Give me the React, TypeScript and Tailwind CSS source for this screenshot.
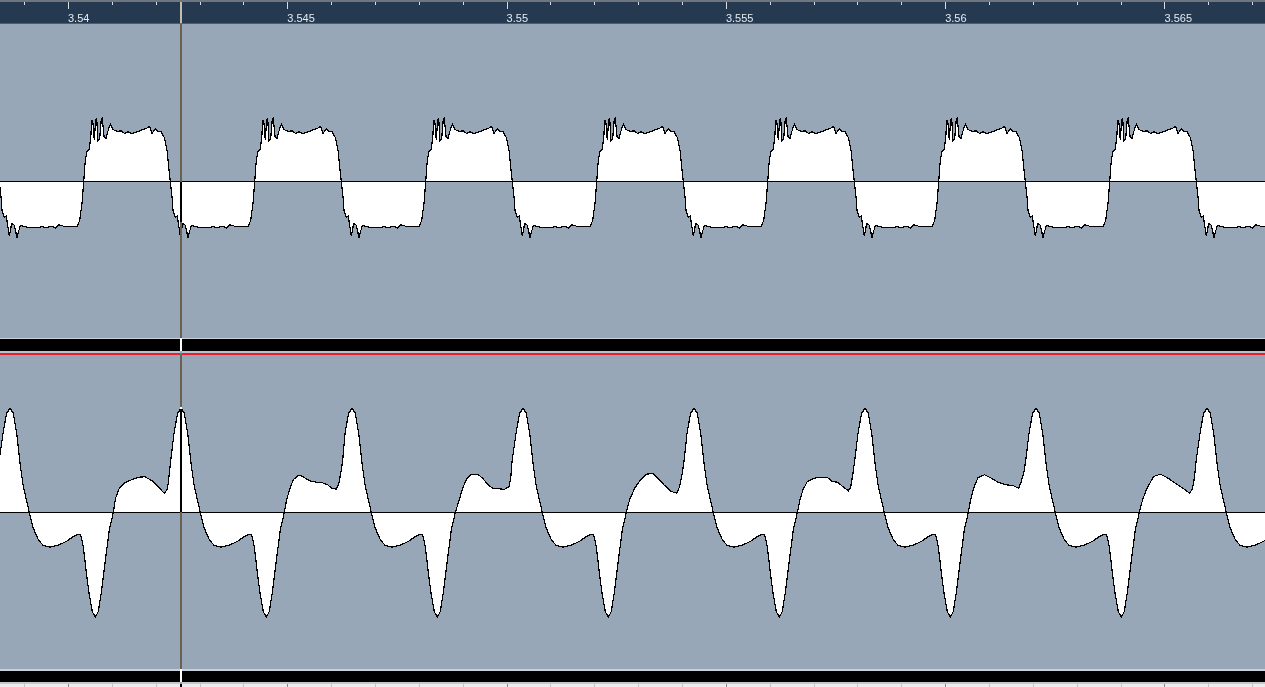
const PERIOD = 171;
const ZERO_Y = 157.5;

// points below are read off 3x crops of the reference: [px, py]
const SQUARE: number[][] = [
  [17, 214], [22, 150], [27, 125], [33, 118], [38, 85], [41, 30], [44, 30], [49, 90], [53, 30], [56, 26], [60, 90],
  [65, 85], [70, 26], [73, 24], [78, 78], [84, 84], [92, 55], [98, 42], [105, 58], [118, 64], [130, 62], [140, 70],
  [150, 65], [160, 70], [175, 66], [190, 60], [205, 55], [215, 48], [222, 70], [232, 55], [240, 65], [250, 65],
  [260, 85], [267, 120], [272, 170], [277, 214], [282, 260], [285, 300], [292, 322], [298, 318], [307, 378], [314, 340],
  [322, 345], [330, 382], [340, 345], [355, 350], [370, 353], [390, 352], [405, 350], [420, 352], [435, 348], [445, 354],
  [455, 344], [470, 348], [490, 350], [510, 350], [518, 330], [525, 280], [530, 214],
];

// peak down through the negative lobe, x relative to the peak
const LOBE: number[][] = [
  [0, 25], [10, 40], [20, 100], [30, 190], [40, 260], [58, 338], [70, 385], [85, 420], [100, 437], [120, 442],
  [145, 436], [170, 424], [190, 410], [205, 403], [212, 405], [220, 440], [228, 510], [237, 580], [247, 635], [256, 652],
  [265, 635], [275, 570], [285, 490], [298, 390],
];

// the hump between lobe and next peak differs a little each cycle
const HUMPS: number[][][] = [
  [[0, 143], [7, 100], [18, 70], [35, 53], [55, 45], [75, 37], [95, 36], [115, 47], [130, 60], [145, 77], [154, 86], [163, 70], [172, -10]],
  [[0, 143], [7, 105], [17, 70], [27, 45], [40, 33], [50, 32], [63, 40], [77, 48], [95, 52], [115, 54], [130, 60], [143, 70], [155, 73], [163, 60], [170, 20], [175, -10]],
  [[0, 143], [12, 105], [22, 70], [34, 42], [47, 29], [67, 28], [82, 40], [97, 58], [112, 70], [132, 72], [147, 74], [162, 65], [167, 30], [170, -10]],
  [[0, 143], [10, 105], [25, 70], [45, 42], [60, 28], [80, 26], [95, 40], [115, 62], [135, 80], [152, 85], [160, 65], [167, 30], [173, -10]],
  [[0, 143], [8, 105], [17, 75], [30, 50], [50, 40], [70, 37], [90, 38], [105, 50], [120, 52], [140, 68], [153, 78], [160, 68], [167, 25], [172, -10]],
  [[0, 143], [7, 105], [16, 70], [29, 38], [49, 30], [69, 40], [89, 52], [114, 60], [134, 62], [151, 70], [159, 50], [167, 20], [172, -10]],
  [[0, 143], [10, 105], [23, 70], [43, 35], [63, 28], [83, 38], [108, 55], [133, 72], [151, 85], [160, 70], [166, 35], [170, -10]],
];

function squarePoints() {
  const out: string[] = [];
  for (let n = -2; n < 9; n++) {
    for (const [px, py] of SQUARE) {
      out.push(`${(78 + px / 3 + n * PERIOD).toFixed(1)},${(ZERO_Y + (py - 214) / 3).toFixed(1)}`);
    }
  }
  return out;
}

function pulsePoints() {
  const out: string[] = [];
  for (let n = -1; n < 8; n++) {
    const peak = 10 + n * PERIOD;
    for (const [dx, py] of LOBE) {
      out.push(`${(peak + dx / 3).toFixed(1)},${(ZERO_Y + (py - 338) / 3).toFixed(1)}`);
    }
    const crossing = peak + 103.3;
    for (const [dx, py] of HUMPS[(n + 7) % 7]) {
      out.push(`${(crossing + dx / 3).toFixed(1)},${(ZERO_Y + (py - 143) / 3).toFixed(1)}`);
    }
    const next = peak + PERIOD;
    out.push(`${(next - 7).toFixed(1)},${(ZERO_Y - 79).toFixed(1)}`);
    out.push(`${(next - 3.5).toFixed(1)},${(ZERO_Y - 99).toFixed(1)}`);
  }
  return out;
}

const TICKS = Array.from({ length: 30 }, (_, i) => 24.6 + i * 43.86);
const LABELS = ["3.54", "3.545", "3.55", "3.555", "3.56", "3.565"];

function Ruler() {
  return (
    <div className="h-[21px] shrink-0 overflow-hidden bg-[#253a50]">
      <svg className="block h-[7px] w-full" shapeRendering="crispEdges">
        {TICKS.map((x, i) => (
          <line key={i} x1={x} x2={x} y1={0} y2={i % 5 === 1 ? 7 : 3} stroke="#d8dee6" />
        ))}
      </svg>
      <div className="flex pl-[68px] pt-[4px] will-change-transform">
        {LABELS.map((label) => (
          <div key={label} className="w-[219.3px] shrink-0 text-[11px] leading-[10px] text-[#e6ebf0]">
            {label}
          </div>
        ))}
      </div>
    </div>
  );
}

function Trace({ pts }: { pts: string[] }) {
  // close the fill along the centre line so it doesn't cut across the peaks
  const fill = [`-400,${ZERO_Y}`, ...pts, `1700,${ZERO_Y}`].join(" ");
  return (
    <div className="h-[314px] shrink-0 bg-[#98a7b8]">
      <svg className="block h-full w-full" shapeRendering="crispEdges">
        <polygon points={fill} fill="#fff" stroke="none" />
        <polyline points={pts.join(" ")} fill="none" stroke="#000" strokeWidth={1.2} />
        <line x1={0} x2={1265} y1={ZERO_Y} y2={ZERO_Y} stroke="#000" />
      </svg>
    </div>
  );
}

// the playhead changes colour depending on what it crosses
const CURSOR: [string, number][] = [
  ["bg-[#c9bdaa]", 21],
  ["bg-[#2e8f8f]", 1],
  ["bg-[#6b5f52]", 158],
  ["bg-black", 40],
  ["bg-[#6b5f52]", 116],
  ["bg-white", 13],
  ["bg-[#98a7b8]", 2],
  ["bg-[#2e8f8f]", 2],
  ["bg-[#6b5f52]", 52],
  ["bg-white", 2],
  ["bg-black", 103],
  ["bg-[#6b5f52]", 157],
  ["bg-white", 13],
  ["bg-[#98a7b8]", 2],
  ["bg-black", 3],
];

export default function App() {
  return (
    <div className="relative h-[687px] w-full overflow-hidden bg-[#98a7b8] font-['Liberation_Sans',sans-serif]">
      <div className="h-[2px] bg-[#6f7680]" />
      <Ruler />
      <div className="h-px bg-[#e0202c]" />
      <Trace pts={squarePoints()} />
      <div className="h-px bg-[#c8d0da]" />
      <div className="h-3 bg-black" />
      <div className="h-[2px] bg-[#b9c3cf]" />
      <div className="h-[2px] bg-[#f01c28]" />
      <Trace pts={pulsePoints()} />
      <div className="h-[2px] bg-[#c8d0da]" />
      <div className="h-[11px] bg-black" />
      <div className="h-[2px] bg-[#c4c8cc]" />
      <div className="h-[3px] bg-[#ececec]">
        <svg className="block h-full w-full" shapeRendering="crispEdges">
          {TICKS.map((x, i) => (
            <line key={i} x1={x} x2={x} y1={0} y2={3} stroke={i % 5 === 1 ? "#8a8a8a" : "#c4c4c4"} />
          ))}
        </svg>
      </div>
      <div className="absolute left-[180px] top-[2px] flex w-[2px] flex-col">
        {CURSOR.map(([color, h], i) => (
          <div key={i} className={color} style={{ height: h }} />
        ))}
      </div>
    </div>
  );
}
